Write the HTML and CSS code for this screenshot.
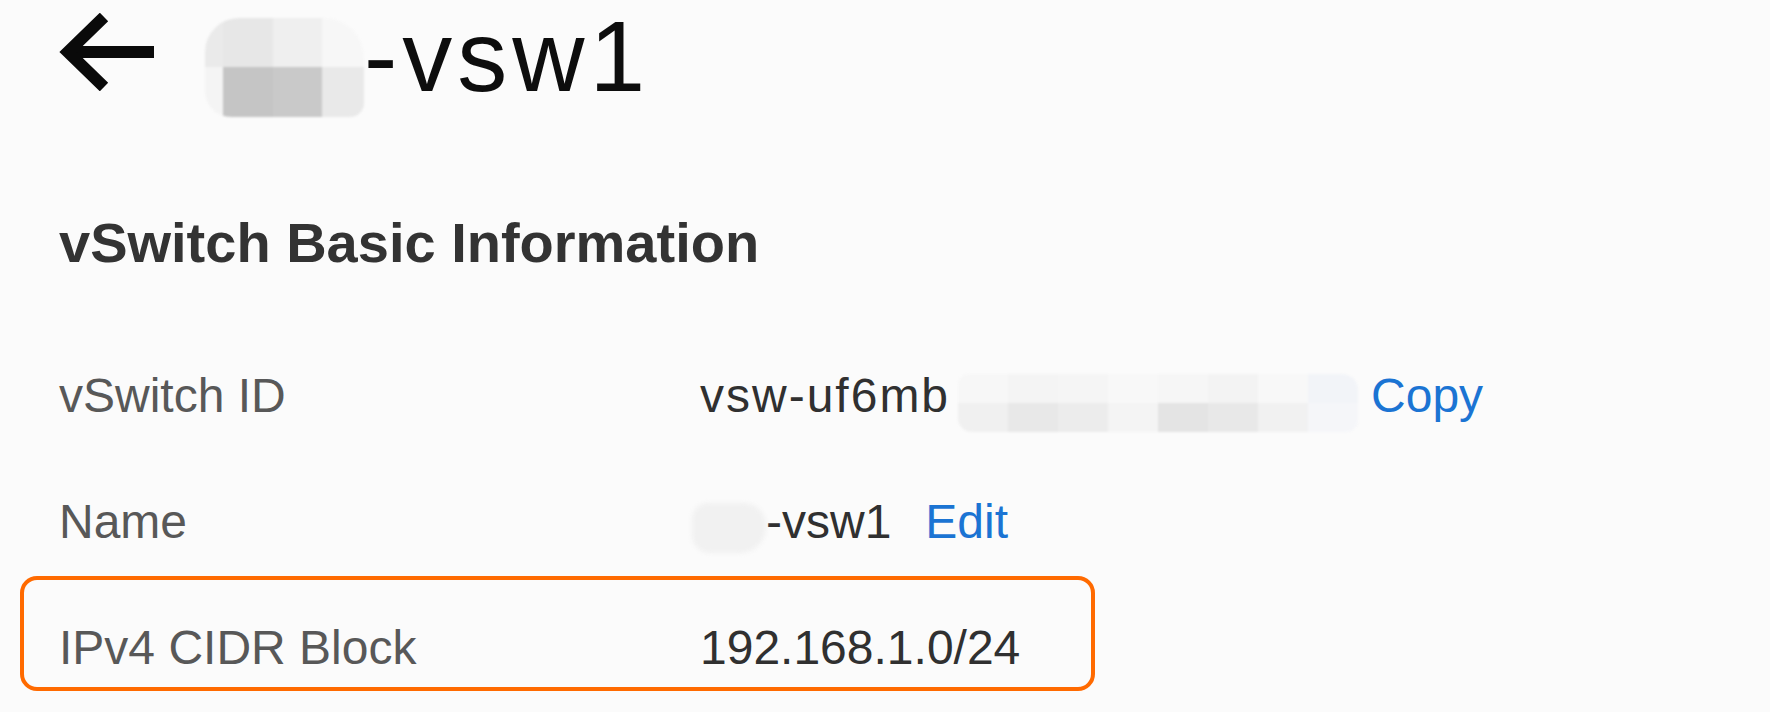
FILE: index.html
```html
<!DOCTYPE html>
<html lang="en">
<head>
<meta charset="utf-8">
<title>vSwitch detail</title>
<link rel="stylesheet" href="styles.css">
</head>
<body>
<div class="page">
  <header class="header">
    <svg class="back" viewBox="0 0 96 78" width="96" height="78" aria-hidden="true">
      <path d="M12 39 H96" fill="none" stroke="#0a0a0a" stroke-width="12"/>
      <path d="M46 4 L10 39 L46 74" fill="none" stroke="#0a0a0a" stroke-width="12" stroke-linejoin="miter"/>
    </svg>
    <div class="mosaic title-mosaic">
      <span class="c a1"></span><span class="c a2"></span><span class="c a3"></span><span class="c a4"></span>
      <span class="c b1"></span><span class="c b2"></span><span class="c b3"></span><span class="c b4"></span>
    </div>
    <h1 class="title">-vsw1</h1>
  </header>

  <h2 class="section-title">vSwitch Basic Information</h2>

  <div class="rows">
    <div class="row">
      <div class="label">vSwitch ID</div>
      <div class="value">
        <span class="id-text">vsw-uf6mb</span>
        <span class="mosaic id-mosaic">
          <span class="m m1"></span><span class="m m2"></span><span class="m m3"></span><span class="m m4"></span><span class="m m5"></span><span class="m m6"></span><span class="m m7"></span><span class="m m8"></span>
          <span class="m n1"></span><span class="m n2"></span><span class="m n3"></span><span class="m n4"></span><span class="m n5"></span><span class="m n6"></span><span class="m n7"></span><span class="m n8"></span>
        </span>
        <a class="link copy">Copy</a>
      </div>
    </div>
    <div class="row">
      <div class="label">Name</div>
      <div class="value">
        <span class="name-blur"></span>
        <span>-vsw1</span>
        <a class="link edit">Edit</a>
      </div>
    </div>
    <div class="row highlight">
      <div class="label">IPv4 CIDR Block</div>
      <div class="value">192.168.1.0/24</div>
    </div>
  </div>
</div>
</body>
</html>
```

FILE: styles.css
```css
* { box-sizing: border-box; }

html, body {
  margin: 0;
  padding: 0;
  background: #fbfbfb;
}

body {
  font-family: "Liberation Sans", Arial, sans-serif;
  width: 1770px;
  height: 712px;
  overflow: hidden;
}

.header {
  display: flex;
  align-items: flex-start;
  height: 104px;
  padding-left: 58px;
}

.back {
  display: block;
  flex: none;
  margin-top: 13px;
}

.title-mosaic {
  margin-top: 18px;
  margin-left: 51px;
  display: grid;
  grid-template-columns: 18px 50px 49px 42px;
  grid-template-rows: 49px 50px;
  border-radius: 34px 40px 14px 26px;
  overflow: hidden;
  filter: blur(1.2px);
  flex: none;
}

.title-mosaic .c { display: block; }
.title-mosaic .a1 { background: #eaeaea; }
.title-mosaic .a2 { background: #e7e7e7; }
.title-mosaic .a3 { background: #efefef; }
.title-mosaic .a4 { background: #f7f7f7; }
.title-mosaic .b1 { background: #f4f4f4; }
.title-mosaic .b2 { background: #c5c5c5; }
.title-mosaic .b3 { background: #c9c9c9; }
.title-mosaic .b4 { background: #e9e9e9; }

.title {
  margin: 6px 0 0 0;
  font-size: 100px;
  line-height: 1;
  font-weight: 400;
  color: #0d0d0d;
  letter-spacing: 5px;
}

.section-title {
  margin: 111px 0 0 59px;
  font-size: 56px;
  line-height: 1;
  font-weight: 700;
  color: #333333;
}

.rows {
  margin: 53px 0 0 20px;
  display: flex;
  flex-direction: column;
  gap: 11px;
}

.row {
  display: flex;
  align-items: flex-start;
  height: 115px;
  padding: 44px 35px 15px;
  border: 4px solid transparent;
  border-radius: 17px;
  font-size: 48px;
  line-height: 1;
}

.row.highlight {
  width: 1075px;
  border-color: #ff6a00;
}

.label {
  width: 641px;
  flex: none;
  color: #585858;
}

.value {
  display: flex;
  align-items: flex-start;
  height: 48px;
  color: #303030;
  white-space: nowrap;
}

.id-text { letter-spacing: 2px; }

.link {
  color: #1b74d3;
}

.copy { margin-left: 13px; }
.edit { margin-left: 34px; }

.id-mosaic {
  display: grid;
  grid-template-columns: repeat(8, 50px);
  grid-template-rows: 29px 29px;
  margin-left: 8px;
  margin-top: 2px;
  border-radius: 10px 16px 12px 14px;
  overflow: hidden;
  filter: blur(1px);
}

.id-mosaic .m { display: block; }
.id-mosaic .m1 { background: #f7f7f7; }
.id-mosaic .m2 { background: #f4f4f4; }
.id-mosaic .m3 { background: #f5f5f5; }
.id-mosaic .m4 { background: #f8f8f8; }
.id-mosaic .m5 { background: #f6f6f6; }
.id-mosaic .m6 { background: #f3f3f3; }
.id-mosaic .m7 { background: #f8f8f8; }
.id-mosaic .m8 { background: #f2f4f8; }
.id-mosaic .n1 { background: #f0f0f0; }
.id-mosaic .n2 { background: #e8e8e8; }
.id-mosaic .n3 { background: #ececec; }
.id-mosaic .n4 { background: #f4f4f4; }
.id-mosaic .n5 { background: #e4e4e4; }
.id-mosaic .n6 { background: #e8e8e8; }
.id-mosaic .n7 { background: #f1f1f1; }
.id-mosaic .n8 { background: #f5f6f9; }

.name-blur {
  display: block;
  width: 74px;
  height: 50px;
  margin-left: -8px;
  margin-top: 5px;
  background: #f1f1f1;
  border-radius: 16px 22px 26px 18px;
  filter: blur(2px);
}
```
